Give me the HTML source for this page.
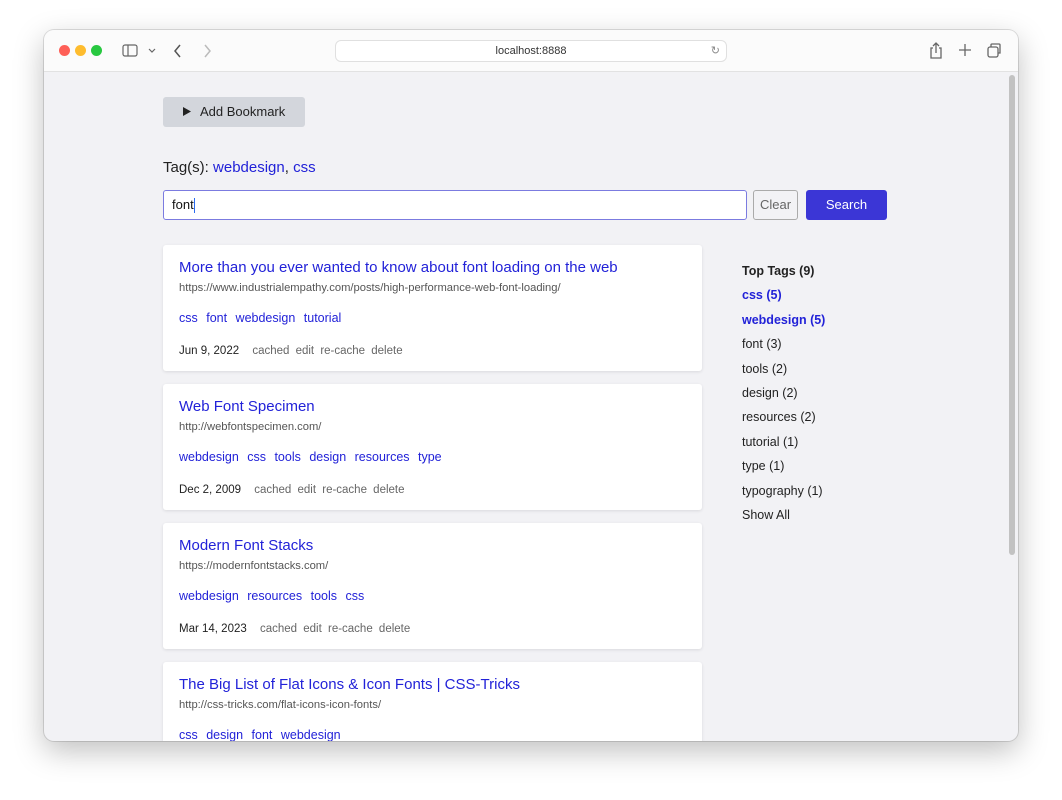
<!DOCTYPE html>
<html><head><meta charset="utf-8"><style>
*{box-sizing:border-box;margin:0;padding:0}
body{width:1062px;height:800px;background:#fff;font-family:"Liberation Sans",Arial,sans-serif;position:relative;overflow:hidden}
.win{position:absolute;left:44px;top:30px;width:974px;height:711px;border-radius:10px;overflow:hidden;box-shadow:0 10px 30px rgba(0,0,0,.25),0 0 0 1px rgba(0,0,0,.12);background:#f2f2f5}
.bar{position:absolute;left:0;top:0;width:100%;height:42px;background:#fbfbfb;border-bottom:1px solid #e2e2e2}
.dot{position:absolute;top:15px;width:11px;height:11px;border-radius:50%}
.url{position:absolute;left:291px;top:10px;width:392px;height:22px;border:1px solid #e0e0e0;border-radius:6px;background:#fff;font-size:11px;color:#333;text-align:center;line-height:20px}
.c{position:absolute;left:0;top:43px;width:100%;bottom:0}
a{color:#2222d8;text-decoration:none}
.card{position:absolute;left:119px;width:539px;height:126px;background:#fff;border-radius:3px;box-shadow:0 1px 3px rgba(0,0,0,.1)}
.card .t{position:absolute;left:16px;top:14px;font-size:15px;color:#2222d8}
.card .u{position:absolute;left:16px;top:37px;font-size:11.2px;color:#555}
.card .g{position:absolute;left:16px;top:66px;font-size:12.5px;color:#2222d8;word-spacing:5px}
.card .m{position:absolute;left:16px;top:100px;font-size:11.5px;color:#222}
.card .m span{color:#666;margin-left:10px;word-spacing:3px}
.side{position:absolute;left:698px;font-size:12.5px;color:#222;line-height:24.4px}
</style></head><body>
<div class="win">
<div class="bar">
<div class="dot" style="left:15px;background:#fe5f57"></div>
<div class="dot" style="left:31px;background:#febc2e"></div>
<div class="dot" style="left:47px;background:#28c840"></div>
<svg style="position:absolute;left:78px;top:13px" width="38" height="16" fill="none" stroke="#666" stroke-width="1.2"><rect x="1" y="2" width="14" height="11" rx="2"/><line x1="6" y1="2" x2="6" y2="13"/><path d="M27 6l3 3 3-3"/></svg>
<svg style="position:absolute;left:128px;top:13px" width="40" height="16" fill="none" stroke="#555" stroke-width="1.5"><path d="M8 2l-5 6 5 6"/><path d="M33 2l5 6-5 6" stroke="#bbb"/></svg>
<div class="url">localhost:8888<span style="position:absolute;right:6px;color:#888">↻</span></div>
<svg style="position:absolute;left:884px;top:11px" width="80" height="20" fill="none" stroke="#666" stroke-width="1.3"><path d="M5 7H3v10h10V7h-2M8 12V2M5 5l3-3 3 3"/><path d="M37 3v12M31 9h12"/><rect x="60" y="6" width="10" height="10" rx="2"/><path d="M63 6V4a1 1 0 0 1 1-1h7a1 1 0 0 1 1 1v8h-2"/></svg>
</div>
<div class="c">
<div style="position:absolute;left:119px;top:24px;width:142px;height:30px;background:#d3d6dc;border-radius:3px;font-size:13px;color:#222;line-height:30px;padding-left:20px"><svg width="8" height="9" style="margin-right:9px;vertical-align:0"><path d="M0 0L8 4.5 0 9z" fill="#222"/></svg>Add Bookmark</div>
<div style="position:absolute;left:119px;top:86px;font-size:15px;color:#222">Tag(s): <a>webdesign</a>, <a>css</a></div>
<div style="position:absolute;left:119px;top:117px;width:584px;height:30px;background:#fff;border:1px solid #7b7be0;border-radius:3px;font-size:13px;line-height:28px;padding-left:8px;color:#111">font<span style="display:inline-block;width:1px;height:15px;background:#2a6cf0;vertical-align:middle"></span></div>
<div style="position:absolute;left:709px;top:117px;width:45px;height:30px;border:1px solid #aaa;border-radius:3px;font-size:13px;color:#666;line-height:28px;text-align:center">Clear</div>
<div style="position:absolute;left:762px;top:117px;width:81px;height:30px;background:#3b36d6;border-radius:3px;font-size:13px;color:#fff;line-height:30px;text-align:center">Search</div>

<div class="card" style="top:172px"><div class="t">More than you ever wanted to know about font loading on the web</div><div class="u">https://www.industrialempathy.com/posts/high-performance-web-font-loading/</div><div class="g">css font webdesign tutorial</div><div class="m">Jun 9, 2022 <span>cached edit re-cache delete</span></div></div>
<div class="card" style="top:311px"><div class="t">Web Font Specimen</div><div class="u">http://webfontspecimen.com/</div><div class="g">webdesign css tools design resources type</div><div class="m">Dec 2, 2009 <span>cached edit re-cache delete</span></div></div>
<div class="card" style="top:450px"><div class="t">Modern Font Stacks</div><div class="u">https://modernfontstacks.com/</div><div class="g">webdesign resources tools css</div><div class="m">Mar 14, 2023 <span>cached edit re-cache delete</span></div></div>
<div class="card" style="top:589px"><div class="t">The Big List of Flat Icons &amp; Icon Fonts | CSS-Tricks</div><div class="u">http://css-tricks.com/flat-icons-icon-fonts/</div><div class="g">css design font webdesign</div></div>

<div class="side" style="top:186px">
<b>Top Tags (9)</b><br><a><b>css (5)</b></a><br><a><b>webdesign (5)</b></a><br>font (3)<br>tools (2)<br>design (2)<br>resources (2)<br>tutorial (1)<br>type (1)<br>typography (1)<br>Show All</div>
<div style="position:absolute;left:965px;top:2px;width:6px;height:480px;background:#c2c2c2;border-radius:3px"></div>
</div>
</div>
</body></html>
